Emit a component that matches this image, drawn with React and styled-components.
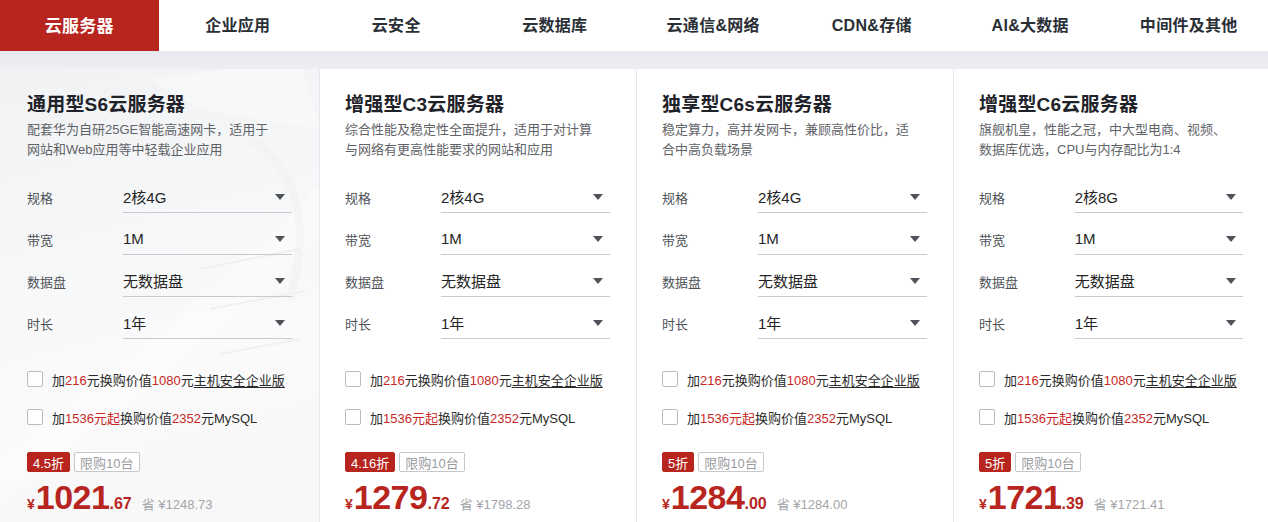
import React from 'react';
import styled, { createGlobalStyle } from 'styled-components';

const GlobalStyle = createGlobalStyle`
  * { box-sizing: border-box; }
  body {
    margin: 0;
    background: #ffffff;
    font-family: "Liberation Sans", "Noto Sans CJK SC", sans-serif;
    color: #222;
  }
`;

const TABS = ['云服务器', '企业应用', '云安全', '云数据库', '云通信&网络', 'CDN&存储', 'AI&大数据', '中间件及其他'];

const PRODUCTS = [
  {
    title: '通用型S6云服务器',
    desc: '配套华为自研25GE智能高速网卡，适用于网站和Web应用等中轻载企业应用',
    spec: '2核4G',
    discount: '4.5折',
    price: '1021',
    cents: '.67',
    save: '¥1248.73',
    decorated: true,
  },
  {
    title: '增强型C3云服务器',
    desc: '综合性能及稳定性全面提升，适用于对计算与网络有更高性能要求的网站和应用',
    spec: '2核4G',
    discount: '4.16折',
    price: '1279',
    cents: '.72',
    save: '¥1798.28',
  },
  {
    title: '独享型C6s云服务器',
    desc: '稳定算力，高并发网卡，兼顾高性价比，适合中高负载场景',
    spec: '2核4G',
    discount: '5折',
    price: '1284',
    cents: '.00',
    save: '¥1284.00',
  },
  {
    title: '增强型C6云服务器',
    desc: '旗舰机皇，性能之冠，中大型电商、视频、数据库优选，CPU与内存配比为1:4',
    spec: '2核8G',
    discount: '5折',
    price: '1721',
    cents: '.39',
    save: '¥1721.41',
  },
];

const Page = styled.div`
  width: 1268px;
  height: 522px;
  overflow: hidden;
  background: #fff;
`;

const TabBar = styled.nav`
  display: grid;
  grid-template-columns: repeat(8, 1fr);
  height: 51px;
  background: #fff;
`;

const Tab = styled.div`
  display: flex;
  align-items: center;
  justify-content: center;
  padding-bottom: 3px;
  font-size: ${p => (p.active ? '17px' : '16px')};
  font-weight: 700;
  color: ${p => (p.active ? '#fff' : '#2b2f36')};
  background: ${p => (p.active ? '#b7251e' : 'transparent')};
  letter-spacing: 0.3px;
`;

const Band = styled.div`
  height: 18px;
  background: linear-gradient(#e8eaef, #eceef2);
`;

const Cards = styled.section`
  display: grid;
  grid-template-columns: 319px 316px 316px 1fr;
  gap: 1px;
  background: #e7e8ec;
  height: 453px;
`;

const Card = styled.article`
  position: relative;
  overflow: hidden;
  padding: 24px 25px 0 ${p => (p.decorated ? '27px' : '25px')};
  background: ${p => (p.decorated
    ? 'linear-gradient(165deg, #f1f2f4 0%, #f6f7f8 35%, #fafafb 65%, #f7f7f8 100%)'
    : '#fff')};
`;

const Deco = styled.svg`
  position: absolute;
  inset: 0;
  width: 100%;
  height: 100%;
  pointer-events: none;
`;

const Content = styled.div`
  position: relative;
`;

const Title = styled.h3`
  margin: 0;
  font-size: 19px;
  line-height: 24px;
  font-weight: 700;
  color: #1f2329;
  letter-spacing: 0.2px;
`;

const Desc = styled.p`
  margin: 3px 0 0;
  width: 250px;
  font-size: 13px;
  line-height: 19.5px;
  color: #5f6368;
`;

const Form = styled.div`
  display: flex;
  flex-direction: column;
  gap: 10px;
  margin-top: 22px;
`;

const Row = styled.div`
  display: flex;
  align-items: center;
  height: 32px;
`;

const Label = styled.span`
  width: 96px;
  font-size: 13px;
  color: #4e5257;
`;

const Select = styled.div`
  display: flex;
  align-items: center;
  justify-content: space-between;
  width: 169px;
  height: 32px;
  padding-right: 7px;
  border-bottom: 1px solid #c8cacf;
  font-size: 15px;
  color: #252525;
`;

const Caret = styled.span`
  width: 0;
  height: 0;
  border-left: 5px solid transparent;
  border-right: 5px solid transparent;
  border-top: 6px solid #50545a;
`;

const Options = styled.div`
  display: flex;
  flex-direction: column;
  gap: 18px;
  margin-top: 30px;
`;

const Option = styled.label`
  display: flex;
  align-items: center;
  gap: 9px;
  height: 20px;
  font-size: 13px;
  color: #2b2b2b;
`;

const Box = styled.span`
  width: 16px;
  height: 16px;
  border: 1px solid #b9bcc2;
  border-radius: 2px;
  background: #fff;
`;

const Red = styled.span`
  color: #c8281f;
`;

const Link = styled.span`
  text-decoration: underline;
  text-underline-offset: 2px;
`;

const Tags = styled.div`
  display: flex;
  gap: 4px;
  margin-top: 25px;
`;

const Tag = styled.span`
  display: inline-flex;
  align-items: center;
  height: 20px;
  padding: 0 5px;
  border-radius: 2px;
  font-size: 13px;
  color: ${p => (p.solid ? '#fff' : '#9a9ca1')};
  background: ${p => (p.solid ? '#b7251e' : '#fff')};
  border: 1px solid ${p => (p.solid ? '#b7251e' : '#c6c8cc')};
`;

const Price = styled.div`
  display: flex;
  align-items: baseline;
  margin-top: 6px;
  color: #b7251e;
  font-weight: 700;
`;

const Yen = styled.span`
  font-size: 14px;
  margin-right: 1px;
`;

const Amount = styled.span`
  font-size: 34px;
  line-height: 38px;
  letter-spacing: -0.5px;
`;

const Cents = styled.span`
  font-size: 16px;
`;

const Save = styled.span`
  margin-left: 10px;
  font-size: 13px;
  font-weight: 400;
  color: #a3a5aa;
`;

const ProductCard = ({ p }) => (
  <Card decorated={p.decorated}>
    {p.decorated && (
      <Deco viewBox="0 0 319 453" preserveAspectRatio="none">
        <path d="M150 10 L300 -10 L319 60 L200 40 Z" fill="#ffffff" opacity="0.35" />
        <path d="M-20 430 C 80 340, 200 270, 330 130" stroke="#ffffff" strokeWidth="36" fill="none" opacity="0.35" />
        <path d="M250 70 C 300 100, 310 160, 290 230" stroke="#eef0f2" strokeWidth="8" fill="none" opacity="0.5" />
        <path d="M200 200 L300 180 M210 240 L305 222 M220 285 L300 270" stroke="#eff0f2" strokeWidth="2" />
      </Deco>
    )}
    <Content>
      <Title>{p.title}</Title>
      <Desc>{p.desc}</Desc>
      <Form>
        {[['规格', p.spec], ['带宽', '1M'], ['数据盘', '无数据盘'], ['时长', '1年']].map(([k, v]) => (
          <Row key={k}>
            <Label>{k}</Label>
            <Select>
              {v}
              <Caret />
            </Select>
          </Row>
        ))}
      </Form>
      <Options>
        <Option>
          <Box />
          <span>
            加<Red>216</Red>元换购价值<Red>1080</Red>元<Link>主机安全企业版</Link>
          </span>
        </Option>
        <Option>
          <Box />
          <span>
            加<Red>1536元起</Red>换购价值<Red>2352</Red>元MySQL
          </span>
        </Option>
      </Options>
      <Tags>
        <Tag solid>{p.discount}</Tag>
        <Tag>限购10台</Tag>
      </Tags>
      <Price>
        <Yen>¥</Yen>
        <Amount>{p.price}</Amount>
        <Cents>{p.cents}</Cents>
        <Save>省 {p.save}</Save>
      </Price>
    </Content>
  </Card>
);

export default function App() {
  return (
    <Page>
      <GlobalStyle />
      <TabBar>
        {TABS.map((t, i) => (
          <Tab key={t} active={i === 0}>{t}</Tab>
        ))}
      </TabBar>
      <Band />
      <Cards>
        {PRODUCTS.map(p => (
          <ProductCard key={p.title} p={p} />
        ))}
      </Cards>
    </Page>
  );
}
